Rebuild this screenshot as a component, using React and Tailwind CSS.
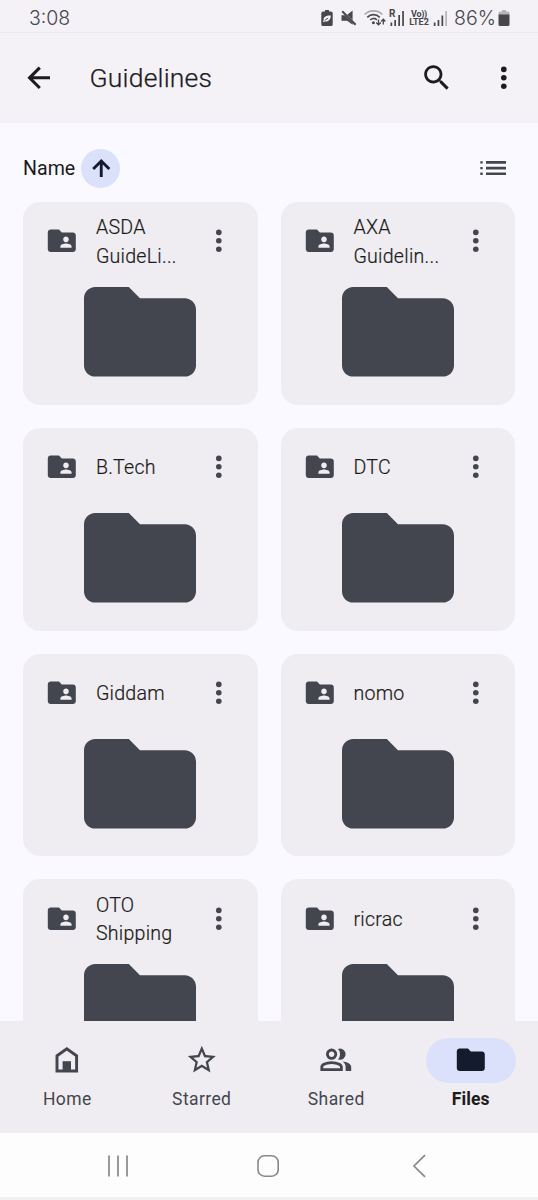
import React from "react";

const folders = [
  { name: ["ASDA", "GuideLi..."] },
  { name: ["AXA", "Guidelin..."] },
  { name: ["B.Tech"] },
  { name: ["DTC"] },
  { name: ["Giddam"] },
  { name: ["nomo"] },
  { name: ["OTO", "Shipping"] },
  { name: ["ricrac"] },
];

const FOLDER_PATH =
  "M10 4H4c-1.1 0-2 .9-2 2v12c0 1.1.9 2 2 2h16c1.1 0 2-.9 2-2V8c0-1.1-.9-2-2-2h-8z";

function Icon({ d, className = "size-[33.6px]" }) {
  return (
    <svg viewBox="0 0 24 24" className={`shrink-0 ${className}`} fill="currentColor">
      <path d={d} fillRule="evenodd" />
    </svg>
  );
}

function MoreIcon() {
  return (
    <svg viewBox="0 0 24 24" className="size-[33.6px] shrink-0" fill="currentColor">
      <circle cx="12" cy="6" r="2" />
      <circle cx="12" cy="12" r="2" />
      <circle cx="12" cy="18" r="2" />
    </svg>
  );
}

function StatusBar() {
  return (
    <div className="flex h-[33px] shrink-0 items-center border-b border-[#ecebf0] pt-1 pr-[28px] pl-[29px] text-[#47464b]">
      <span className="flex-1 pt-px text-[19.5px] leading-none font-['Inter',sans-serif] font-light">
        3:08
      </span>
      {/* power saving battery */}
      <svg width="12" height="16" viewBox="0 0 12 16" className="mr-[8px]">
        <path d="M4 0h4v1.5h2a1.7 1.7 0 0 1 1.7 1.7v11A1.7 1.7 0 0 1 10 16H2a1.7 1.7 0 0 1-1.7-1.8v-11A1.7 1.7 0 0 1 2 1.5h2z" fill="currentColor" />
        <path d="M9.8 5.5C5 5.3 2.3 7 2.7 9.8L2 12.3l1.6-.9C7.3 12.3 9.8 9.5 9.8 5.5z" fill="#f4f2f7" />
        <path d="M3.8 10.3 7.2 8" stroke="currentColor" strokeWidth="1" />
      </svg>
      {/* muted speaker */}
      <svg width="16" height="16" viewBox="0 0 16 16" className="mr-[7px]">
        <path d="M.5 5.2h3.2l8 8v1.6L6.2 10.7H.5zM6.3 4.7 11.600.6V10z" fill="currentColor" />
        <path d="M1.2 1.2 14.6 14.8" stroke="currentColor" strokeWidth="2" />
      </svg>
      {/* wifi with traffic arrows */}
      <svg width="22" height="16" viewBox="0 0 22 16" fill="none" className="mr-[3px]">
        <path d="M.7 4.500C5.200-.3 13.800-.3 18.300 4.500" stroke="#a9a8ad" strokeWidth="1.700" />
        <path d="M3.300 7.300c3.500-3.600 9-3.600 12.400 0" stroke="currentColor" strokeWidth="1.700" />
        <path d="M6.200 10c2-2 4.800-2 6.600-.2" stroke="currentColor" strokeWidth="1.700" />
        <circle cx="9.400" cy="12.700" r="1.500" fill="currentColor" />
        <path d="M14.500 9.500v5M12.200 12.500l2.300 2.300 2.300-2.300M19.300 14.500v-5M17.200 11.500l2.100-2.200 2.100 2.200" stroke="currentColor" strokeWidth="1.300" />
      </svg>
      {/* roaming signal */}
      <div className="relative mr-[4px] h-4 w-[16px]">
        <span className="absolute -top-px left-0 text-[10px] leading-none font-bold">R</span>
        <svg width="16" height="16" viewBox="0 0 16 16" fill="currentColor">
          <path d="M1.500 12.500h1.700V16H1.500zM5.300 10H7v6H5.300zM9.300 5H11v11H9.300zM13.200 1h1.700v15h-1.700z" />
        </svg>
      </div>
      <div className="mr-[4px] flex w-[20px] flex-col items-center text-[9px] leading-[8px] font-bold">
        <span className="tracking-[-0.3px]">Vo))</span>
        <span>LTE2</span>
      </div>
      <svg width="15" height="16" viewBox="0 0 15 16" fill="currentColor" className="mr-[6px]">
        <path d="M.8 12.500h1.700V16H.8zM4.600 10h1.700v6H4.600zM8.500 5.500h1.700V16H8.500z" />
        <path d="M12.300 1H14v15h-1.700z" fill="#b5b4b9" />
      </svg>
      <span className="mr-[3px] w-[41px] pt-px text-[19.5px] leading-none whitespace-nowrap font-['Inter',sans-serif] font-light">
        86%
      </span>
      <svg width="12" height="16" viewBox="0 0 12 16">
        <path d="M4 0h4v1.500h2A1.500 1.700 0 0 1 11.500 3.200V5H.5V3.200A1.700 1.700 0 0 1 2.200 1.500H4z" fill="#b5b4b9" />
        <path d="M.5 4.500h11v9.700a1.700 1.700 0 0 1-1.700 1.800H2.200a1.700 1.700 0 0 1-1.700-1.800z" fill="currentColor" />
      </svg>
    </div>
  );
}

function Header() {
  return (
    <header className="flex h-[90px] shrink-0 items-center pr-[17px] pl-[22.4px] text-[#1b1b20]">
      <svg viewBox="0 0 24 24" className="size-[33.6px] shrink-0" fill="none" stroke="currentColor" strokeWidth="2.2">
        <path d="M20 12H5.500M12.700 4.700 5.400 12l7.300 7.300" />
      </svg>
      <h1 className="ml-[33.5px] flex-1 text-[26.5px] leading-none font-light tracking-[0.2px] [-webkit-text-stroke:0.25px]">
        Guidelines
      </h1>
      <Icon d="M15.500 14h-.790l-.280-.270C15.410 12.590 16 11.110 16 9.500 16 5.910 13.090 3 9.500 3S3 5.910 3 9.500 5.910 16 9.500 16c1.610 0 3.090-.590 4.230-1.570l.270.280v.790l5 4.990L20.490 19zm-6 0C7.010 14 5 11.990 5 9.500S7.010 5 9.500 5 14 7.010 14 9.500 11.990 14 9.500 14z" />
      <div className="ml-[34.200px]">
        <MoreIcon />
      </div>
    </header>
  );
}

function SortRow() {
  return (
    <div className="flex h-[79px] items-center pt-3 pr-[31px] pl-[23px]">
      <span className="w-[58.2px] text-[19.6px] leading-none text-[#1b1b20]">Name</span>
      <button className="flex size-[39.2px] items-center justify-center rounded-full bg-[#dbe1fb] text-[#141b2c]">
        <svg viewBox="0 0 24 24" className="size-[26.5px]" fill="none" stroke="currentColor" strokeWidth="2.600">
          <path d="M12 20V5.500M4.700 12.700 12 5.400l7.300 7.300" />
        </svg>
      </button>
      <svg width="28" height="16" viewBox="0 0 28 16" fill="#44464f" className="mb-px ml-auto">
        <path d="M7 1h20v2.700H7zM7 6.700h20v2.700H7zM7 12.400h20v2.700H7z" />
        <path d="M1.300 1.200h2.400v2.300H1.300zM1.300 6.900h2.400v2.300H1.300zM1.300 12.600h2.400v2.300H1.300z" />
      </svg>
    </div>
  );
}

function FolderCard({ name }) {
  return (
    <div className="h-[202.8px] rounded-[17px] bg-[#efedf1] text-[#44464f]">
      <div className="flex h-[78.5px] items-center pr-[22px] pl-[22.3px]">
        <Icon d={`${FOLDER_PATH}M15 9c1.100 0 2 .9 2 2s-.9 2-2 2-2-.9-2-2 .9-2 2-2zm4 8h-8v-1c0-1.330 2.670-2 4-2s4 .670 4 2z`} />
        <div className="ml-[17px] flex-1 pt-[3px] text-[19.6px] leading-[28.3px] font-light tracking-[0.25px] whitespace-nowrap text-[#1b1b20] [-webkit-text-stroke:0.2px]">
          {name.map((line) => (
            <div key={line}>{line}</div>
          ))}
        </div>
        <MoreIcon />
      </div>
      <svg viewBox="2 4 20 16" className="mx-auto mt-[6.5px] h-[89.6px] w-[112px] overflow-visible" fill="currentColor">
        <path d={FOLDER_PATH} />
      </svg>
    </div>
  );
}

function NavItem({ label, active, children }) {
  return (
    <div className="flex flex-1 flex-col items-center pt-[17px]">
      <div
        className={`flex h-[45px] w-[89.6px] items-center justify-center rounded-full ${
          active ? "bg-[#dbe1fb] text-[#141b2c]" : "text-[#44464f]"
        }`}
      >
        {children}
      </div>
      <span
        className={`mt-[5px] text-[17.5px] leading-[22px] ${
          active
            ? "font-bold tracking-[0.1px] text-[#1b1b20]"
            : "tracking-[0.4px] text-[#44464f]"
        }`}
      >
        {label}
      </span>
    </div>
  );
}

function BottomNav() {
  return (
    <nav className="flex h-[112px] shrink-0 bg-[#efedf1]">
      <NavItem label="Home">
        <svg viewBox="0 0 24 24" className="size-[33.6px]">
          <path d="M5 20V9.200l7-5 7 5V20z" fill="none" stroke="currentColor" strokeWidth="2.100" />
          <path d="M9 13h6v7H9z" fill="currentColor" />
        </svg>
      </NavItem>
      <NavItem label="Starred">
        <Icon d="M22 9.240l-7.190-.620L12 2 9.190 8.630 2 9.240l5.460 4.730L5.820 21 12 17.270 18.180 21l-1.630-7.030zM12 15.400l-3.760 2.270 1-4.280-3.320-2.880 4.380-.380L12 6.100l1.710 4.040 4.380.380-3.320 2.880 1 4.280z" />
      </NavItem>
      <NavItem label="Shared">
        <Icon d="M1 20v-2.800q0-.850.438-1.562T2.600 14.550q1.550-.775 3.150-1.162T9 13t3.250.388 3.150 1.162q.725.375 1.163 1.088T17 17.200V20zm18 0v-3q0-1.100-.612-2.113T16.650 13.150q1.275.150 2.400.513t2.100.887q.900.500 1.375 1.113T23 17v3zM9 12q-1.650 0-2.825-1.175T5 8t1.175-2.825T9 4t2.825 1.175T13 8t-1.175 2.825T9 12m10-4q0 1.650-1.175 2.825T15 12q-.275 0-.700-.063t-.700-.137q.675-.800 1.038-1.775T15 8t-.362-2.025T13.600 4.200q.350-.125.700-.163T15 4q1.650 0 2.825 1.175T19 8M3 18h12v-.800q0-.275-.137-.500t-.363-.350q-1.350-.675-2.725-1.012T9 15t-2.775.338T3.500 16.350q-.225.125-.362.350T3 17.200zm6-8q.825 0 1.413-.587T11 8t-.587-1.412T9 6t-1.412.588T7 8t.588 1.413T9 10" />
      </NavItem>
      <NavItem label="Files" active>
        <Icon d={FOLDER_PATH} />
      </NavItem>
    </nav>
  );
}

function SystemNav() {
  return (
    <div className="flex h-[67.5px] shrink-0 flex-col bg-[#fdfdfe]">
      <div className="flex h-[64px] items-center pt-[2px] pl-[107px] text-[#88888a]">
        <svg width="22" height="24" viewBox="0 0 22 24" stroke="currentColor" strokeWidth="1.7">
          <path d="M2 1.500v21M11 1.500v21M20 1.500v21" />
        </svg>
        <svg width="24" height="24" viewBox="0 0 24 24" fill="none" stroke="currentColor" strokeWidth="1.6" className="ml-[127px]">
          <rect x="2" y="1.800" width="20.200" height="20.400" rx="6.500" />
        </svg>
        <svg width="16" height="24" viewBox="0 0 16 24" fill="none" stroke="currentColor" strokeWidth="1.7" className="ml-[131px]">
          <path d="M14 1.200 3 12l11 10.800" />
        </svg>
      </div>
      <div className="flex-1 bg-[#f1f0f3]" />
    </div>
  );
}

export default function App() {
  return (
    <div className="flex h-[1200px] w-[538px] flex-col overflow-hidden bg-[#f4f2f7] font-['Roboto',sans-serif]">
      <StatusBar />
      <Header />
      <main className="min-h-0 flex-1 overflow-hidden bg-[#faf9ff]">
        <SortRow />
        <div className="grid grid-cols-2 gap-[23px] px-[23px]">
          {folders.map((folder) => (
            <FolderCard key={folder.name.join(" ")} name={folder.name} />
          ))}
        </div>
      </main>
      <BottomNav />
      <SystemNav />
    </div>
  );
}
